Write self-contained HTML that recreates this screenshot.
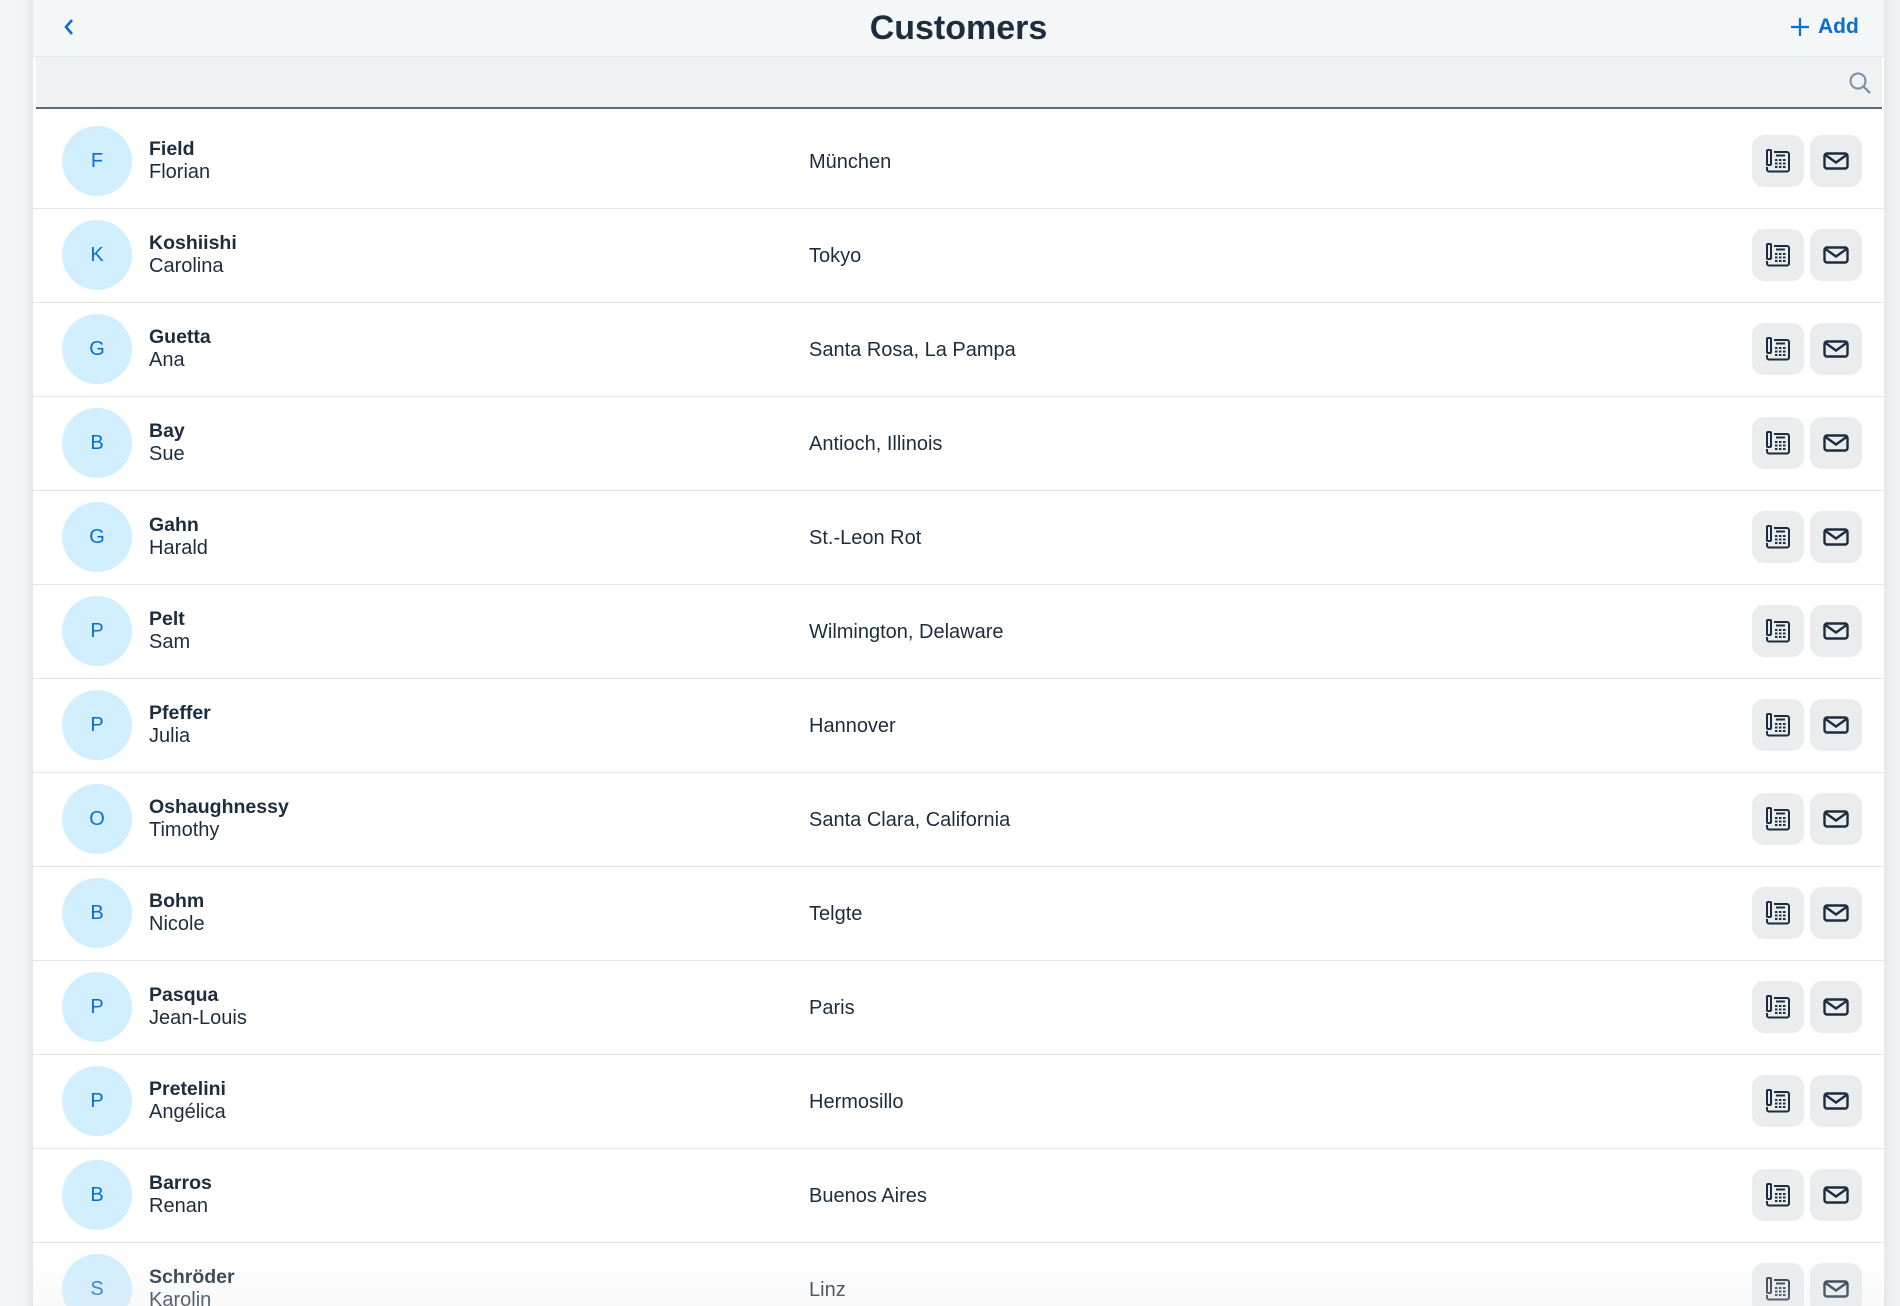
<!DOCTYPE html>
<html><head><meta charset="utf-8"><style>
*{margin:0;padding:0;box-sizing:border-box}
body{width:1900px;height:1306px;overflow:hidden;background:#f2f3f4;font-family:"Liberation Sans",sans-serif;color:#1d2d3e;position:relative}
.side{position:absolute;top:0;bottom:0;left:0;width:33px;background:linear-gradient(90deg,#f5f6f7 0,#f3f4f5 24px,#e6e7e9 33px)}
.sideR{position:absolute;top:0;bottom:0;left:1884px;right:0;background:linear-gradient(90deg,#e6e7e9,#eeeff0 6px,#f3f4f5)}
.page{position:absolute;left:33px;top:0;width:1851px;height:1306px;background:#fff;overflow:hidden}
.hdr{height:57px;background:#f5f6f7;border-bottom:1px solid #e5e6e7;position:relative}
.hdr h1{position:absolute;left:0;right:0;text-align:center;top:9px;font-size:34px;font-weight:bold;color:#1d2d3e}
.back{position:absolute;left:30px;top:17px}
.add{position:absolute;left:1757px;top:15px;color:#0a6ed1;font-weight:bold;font-size:21px;display:flex;align-items:center;gap:8px}
.sb{height:52px;background:#eff1f2;position:relative;border-bottom:2px solid #556b82;margin-left:3px;margin-right:2px}
.sb svg{position:absolute;right:10px;top:14px}
.gap{height:6px;background:#fff}
.row{height:94px;border-bottom:1px solid #e5e5e5;position:relative}
.av{position:absolute;left:29px;top:11px;width:70px;height:70px;border-radius:50%;background:#d1efff;color:#0a6ed1;font-size:20px;text-align:center;line-height:70px}
.nm{position:absolute;left:116px;top:23px;font-size:20px;line-height:23px}
.nm b{display:block;font-weight:bold;font-size:19.5px}
.city{position:absolute;left:776px;top:36px;font-size:20px}
.btn{position:absolute;top:20px;width:52px;height:52px;border-radius:12px;background:#eaecee;display:flex;align-items:center;justify-content:center}
.b1{left:1719px}.b2{left:1777px}
.fade{position:absolute;left:0;right:0;bottom:0;height:60px;background:linear-gradient(180deg,rgba(240,241,242,0),rgba(235,236,237,.3))}
</style></head><body>
<div class="side"></div><div class="sideR"></div>
<div class="page">
<div class="hdr">
<svg class="back" width="12" height="20" viewBox="0 0 12 20"><path d="M9 3 L3 10 L9 17" fill="none" stroke="#0a6ed1" stroke-width="2.6"/></svg>
<h1>Customers</h1>
<div class="add"><svg width="20" height="20" viewBox="0 0 20 20"><path d="M10 1V19M1 10H19" stroke="#0a6ed1" stroke-width="2.2"/></svg>Add</div>
</div>
<div class="sb"><svg width="24" height="24" viewBox="0 0 24 24"><circle cx="10" cy="10" r="7.5" fill="none" stroke="#758ca4" stroke-width="2"/><path d="M15.5 15.5L22 22" stroke="#758ca4" stroke-width="2.2"/></svg></div>
<div class="gap"></div>
<div id="rows"></div>
<div class="fade"></div>
</div>
<script>
var d=[["F","Field","Florian","München"],["K","Koshiishi","Carolina","Tokyo"],["G","Guetta","Ana","Santa Rosa, La Pampa"],["B","Bay","Sue","Antioch, Illinois"],["G","Gahn","Harald","St.-Leon Rot"],["P","Pelt","Sam","Wilmington, Delaware"],["P","Pfeffer","Julia","Hannover"],["O","Oshaughnessy","Timothy","Santa Clara, California"],["B","Bohm","Nicole","Telgte"],["P","Pasqua","Jean-Louis","Paris"],["P","Pretelini","Angélica","Hermosillo"],["B","Barros","Renan","Buenos Aires"],["S","Schröder","Karolin","Linz"]];
var ph='<svg width="26" height="26" viewBox="0 0 26 26" fill="none" stroke="#1d2d3e" stroke-width="2"><rect x="2" y="2" width="4" height="15" rx="1"/><path d="M2 19v2.5a2 2 0 0 0 2 2h18a2 2 0 0 0 2-2V6a2 2 0 0 0-2-2H9"/><path d="M11 7.5h9" /><g fill="#1d2d3e" stroke="none"><rect x="10" y="11" width="2.5" height="2"/><rect x="14" y="11" width="2.5" height="2"/><rect x="18" y="11" width="2.5" height="2"/><rect x="10" y="14.5" width="2.5" height="2"/><rect x="14" y="14.5" width="2.5" height="2"/><rect x="18" y="14.5" width="2.5" height="2"/><rect x="10" y="18" width="2.5" height="2"/><rect x="14" y="18" width="2.5" height="2"/><rect x="18" y="18" width="2.5" height="2"/></g></svg>';
var ml='<svg width="26" height="18" viewBox="0 0 26 18" fill="none" stroke="#1d2d3e" stroke-width="2.4"><rect x="1.5" y="1.5" width="23" height="15" rx="2.5"/><path d="M2.5 3L13 10.5 23.5 3"/></svg>';
var h='';d.forEach(function(r){h+='<div class="row"><div class="av">'+r[0]+'</div><div class="nm"><b>'+r[1]+'</b>'+r[2]+'</div><div class="city">'+r[3]+'</div><div class="btn b1">'+ph+'</div><div class="btn b2">'+ml+'</div></div>'});
document.getElementById('rows').innerHTML=h;
</script>
</body></html>
